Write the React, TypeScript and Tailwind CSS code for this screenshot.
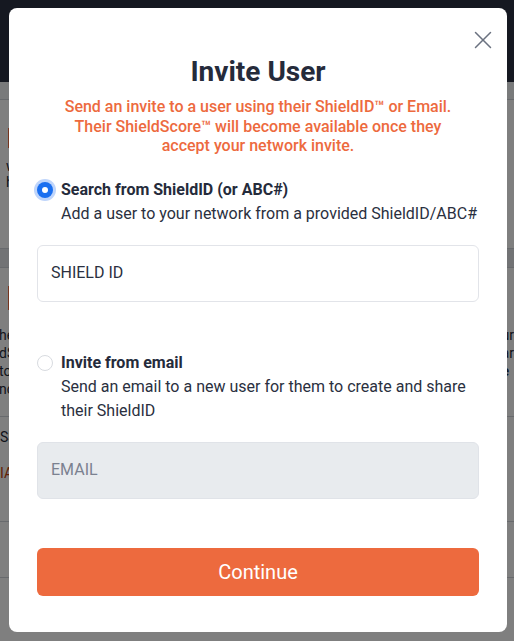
import React from 'react';

function BackgroundPage() {
  return (
    <div className="min-h-[641px] bg-white font-['Roboto',sans-serif] text-[14px] text-[#1f2937]">
      <div className="h-[82px] bg-[#2a3142]" />
      <div className="h-[18px] border-b border-[#d1d5db] bg-[#f3f4f6]" />
      <div className="pt-[28px] pl-[8px] pr-[8px]">
        <div className="h-[20px] w-[4px] bg-[#ec6a3e]" />
        <div className="mt-[10px] flex justify-between leading-[16px]">
          <div className="-ml-[2px]">
            <div>we</div>
            <div>hn</div>
          </div>
          <div>vw</div>
        </div>
      </div>
      <div className="mt-[58px] h-[20px] border-y border-[#d1d5db] bg-[#e5e7eb]" />
      <div className="pt-[18px] pl-[8px]">
        <div className="h-[24px] w-[4px] bg-[#ec6a3e]" />
      </div>
      <div className="mt-[16px] flex justify-between leading-[18px]">
        <div className="-ml-[1px]">
          <div>he</div>
          <div>dS</div>
          <div>to</div>
          <div>nc</div>
        </div>
        <div className="text-left">
          <div>ur</div>
          <div>ar</div>
          <div className="font-bold">e</div>
          <div>&nbsp;</div>
        </div>
      </div>
      <div className="mt-[18px] border-t border-[#d1d5db] pt-[10px] leading-[20px]">
        <div>SS</div>
        <div className="mt-[16px] text-[#c2410c]">IA</div>
      </div>
      <div className="mt-[38px] h-[56px] border-t border-[#d1d5db]" />
      <div className="border-t border-[#d1d5db]" />
    </div>
  );
}

function Radio({ checked }: { checked: boolean }) {
  if (checked) {
    return (
      <span className="mt-[4px] flex h-4 w-4 shrink-0 items-center justify-center rounded-full bg-[#1a6ff0] ring-[3px] ring-[#bfd5fb]">
        <span className="h-[6px] w-[6px] rounded-full bg-white" />
      </span>
    );
  }
  return <span className="mt-[4px] h-4 w-4 shrink-0 rounded-full border border-[#d8dbe0] bg-white" />;
}

export default function App() {
  return (
    <div className="relative h-[641px] w-[514px] overflow-hidden">
      <BackgroundPage />

      {/* Overlay + modal */}
      <div className="fixed inset-0 bg-black/50">
        <div className="relative ml-[9px] mt-[8px] w-[498px] rounded-lg bg-white px-7 pb-9 pt-[47px] font-['Roboto',sans-serif]">
          <button className="absolute right-[15px] top-[23px] text-[#6b7280]">
            <svg width="18" height="18" viewBox="0 0 18 18" fill="none" stroke="currentColor" strokeWidth="1.5" strokeLinecap="round">
              <line x1="1.5" y1="1.5" x2="16.5" y2="16.5" />
              <line x1="16.5" y1="1.5" x2="1.5" y2="16.5" />
            </svg>
          </button>

          <h2 className="text-center text-[28px] font-bold leading-[34px] text-[#252b3b]">Invite User</h2>
          <p className="mt-2 text-center text-[16px] font-medium leading-[19.5px] text-[#ed6a3e]">
            Send an invite to a user using their ShieldID™ or Email.
            <br />
            Their ShieldScore™ will become available once they
            <br />
            accept your network invite.
          </p>

          <div className="mt-[22px] flex gap-2">
            <Radio checked />
            <div className="text-[16px] leading-6 text-[#2a3040]">
              <div className="font-bold text-[#252b3b]">Search from ShieldID (or ABC#)</div>
              <div>Add a user to your network from a provided ShieldID/ABC#</div>
            </div>
          </div>

          <div className="mt-[19px] flex h-[57px] items-center rounded-md border border-[#e2e4e9] bg-white px-[13px] text-[16px] text-[#2a3040]">
            SHIELD ID
          </div>

          <div className="mt-[49px] flex gap-2">
            <Radio checked={false} />
            <div className="text-[16px] leading-6 text-[#2a3040]">
              <div className="font-bold text-[#252b3b]">Invite from email</div>
              <div>Send an email to a new user for them to create and share their ShieldID</div>
            </div>
          </div>

          <div className="mt-[19px] flex h-[57px] items-center rounded-md border border-[#e0e3e8] bg-[#e8ebee] px-[13px] text-[16px] text-[#7b8190]">
            EMAIL
          </div>

          <button className="mt-[49px] flex h-12 w-full items-center justify-center rounded-md bg-[#ed6a3e] text-[20px] text-white">
            Continue
          </button>
        </div>
      </div>
    </div>
  );
}
